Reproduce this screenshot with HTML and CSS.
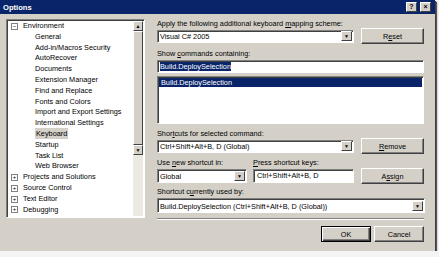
FILE: index.html
```
<!DOCTYPE html>
<html lang="en">

<head>
  <meta charset="UTF-8">
  <title>Options</title>
  <link rel="stylesheet" href="styles.css">
</head>

<body>
  <div class="dialog">
    <div class="titlebar">
      <span class="title">Options</span>
      <span class="tbtn">?</span>
      <span class="tbtn close">&#215;</span>
    </div>

    <div class="main">
      <div class="tree">
        <ul class="items">
          <li class="top"><span class="exp">&#8722;</span>Environment</li>
          <li class="child">General</li>
          <li class="child">Add-in/Macros Security</li>
          <li class="child">AutoRecover</li>
          <li class="child">Documents</li>
          <li class="child">Extension Manager</li>
          <li class="child">Find and Replace</li>
          <li class="child">Fonts and Colors</li>
          <li class="child">Import and Export Settings</li>
          <li class="child">International Settings</li>
          <li class="child"><span class="sel">Keyboard</span></li>
          <li class="child">Startup</li>
          <li class="child">Task List</li>
          <li class="child">Web Browser</li>
          <li class="top"><span class="exp">+</span>Projects and Solutions</li>
          <li class="top"><span class="exp">+</span>Source Control</li>
          <li class="top"><span class="exp">+</span>Text Editor</li>
          <li class="top"><span class="exp">+</span>Debugging</li>
        </ul>
        <div class="vscroll">
          <span class="arrow">&#9650;</span>
          <span class="thumb"></span>
          <span class="arrow">&#9660;</span>
        </div>
      </div>

      <div class="panel">
        <div class="label">Apply the following additional keyboard <u>m</u>apping scheme:</div>
        <div class="row">
          <div class="combo wide"><span class="val">Visual C# 2005</span><span class="drop">&#9660;</span></div>
          <button class="btn">R<u>e</u>set</button>
        </div>

        <div class="label gap">Show <u>c</u>ommands containing:</div>
        <div class="field"><span class="mark">Build.DeploySelection</span></div>
        <div class="list">
          <div class="list-sel">Build.DeploySelection</div>
        </div>

        <div class="label gap">Shor<u>t</u>cuts for selected command:</div>
        <div class="row">
          <div class="combo wide"><span class="val">Ctrl+Shift+Alt+B, D (Global)</span><span class="drop">&#9660;</span></div>
          <button class="btn"><u>R</u>emove</button>
        </div>

        <div class="pair gap-s">
          <div class="col-a">
            <div class="label">Use <u>n</u>ew shortcut in:</div>
            <div class="combo"><span class="val">Global</span><span class="drop">&#9660;</span></div>
          </div>
          <div class="col-b">
            <div class="label"><u>P</u>ress shortcut keys:</div>
            <div class="field keys">Ctrl+Shift+Alt+B, D</div>
          </div>
          <button class="btn assign">A<u>s</u>sign</button>
        </div>

        <div class="label gap-s">Shortcut c<u>u</u>rrently used by:</div>
        <div class="combo full"><span class="val">Build.DeploySelection (Ctrl+Shift+Alt+B, D (Global))</span><span class="drop">&#9660;</span></div>

        <div class="sep"></div>

        <div class="actions">
          <button class="btn default">OK</button>
          <button class="btn">Cancel</button>
        </div>
      </div>
    </div>
  </div>
</body>

</html>
```

FILE: styles.css
```
body {
  margin: 0;
  padding: 0;
  background: #f4f4f4;
  font-family: "Liberation Sans", Arial, sans-serif;
  font-size: 7.3px;
  color: #000;
}

.dialog {
  width: 435px;
  height: 251px;
  background: #d4d0c8;
  box-shadow: 1px 1px 0 #404040, 2px 2px 1px #555;
  overflow: hidden;
}

.titlebar {
  height: 14px;
  background: #0a246a;
  display: flex;
  align-items: center;
  padding: 0 4px 0 3px;
}

.title {
  flex: 1;
  color: #fff;
  font-weight: bold;
  font-size: 7.6px;
}

.tbtn {
  width: 9px;
  height: 8px;
  margin-left: 3px;
  background: #d4d0c8;
  border: 1px solid;
  border-color: #fff #404040 #404040 #fff;
  font-size: 7px;
  font-weight: bold;
  line-height: 8px;
  text-align: center;
}

.main {
  display: flex;
  padding: 5px 0 0 6px;
}

/* tree */

.tree {
  width: 137px;
  height: 197px;
  background: #fff;
  border: 1px solid;
  border-color: #808080 #fff #fff #808080;
  box-shadow: inset 1px 1px 0 #404040;
  display: flex;
  overflow: hidden;
}

.items {
  flex: 1;
  list-style: none;
  margin: 0;
  padding: 1px 0 0 0;
  overflow: hidden;
}

.items li {
  height: 10.8px;
  line-height: 10.8px;
  white-space: nowrap;
}

.top {
  padding-left: 4px;
  display: flex;
  align-items: center;
}

.exp {
  width: 5px;
  height: 5px;
  border: 1px solid #808080;
  font-size: 6px;
  line-height: 5px;
  text-align: center;
  margin-right: 5px;
  color: #000;
}

.child {
  padding-left: 28px;
}

.sel {
  background: #d4d0c8;
  padding: 1px 1px;
}

.vscroll {
  width: 10px;
  margin: 1px 1px 1px 0;
  background: #ece9e4;
  display: flex;
  flex-direction: column;
}

.arrow {
  height: 8px;
  background: #d4d0c8;
  border: 1px solid;
  border-color: #fff #404040 #404040 #fff;
  font-size: 5px;
  line-height: 8px;
  text-align: center;
}

.thumb {
  height: 112px;
  background: #d4d0c8;
  border: 1px solid;
  border-color: #fff #404040 #404040 #fff;
}

/* right panel */

.panel {
  width: 267px;
  margin-left: 12px;
}

.label {
  height: 10px;
  line-height: 10px;
  white-space: nowrap;
}

.gap {
  margin-top: 5px;
}

.gap-s {
  margin-top: 4px;
}

.row {
  display: flex;
  align-items: center;
  justify-content: space-between;
  margin-top: -1px;
}

.combo {
  height: 11px;
  background: #fff;
  border: 1px solid;
  border-color: #808080 #fff #fff #808080;
  box-shadow: inset 1px 1px 0 #404040;
  display: flex;
  align-items: center;
  padding-left: 2px;
}

.combo .val {
  flex: 1;
  white-space: nowrap;
  overflow: hidden;
  padding-top: 1px;
}

.drop {
  width: 9px;
  height: 8px;
  margin-right: 1px;
  background: #d4d0c8;
  border: 1px solid;
  border-color: #fff #404040 #404040 #fff;
  font-size: 5px;
  line-height: 8px;
  text-align: center;
}

.wide {
  width: 193px;
}

.full {
  width: 264px;
  height: 13px;
  margin-top: 1px;
}

.btn {
  font-family: inherit;
  font-size: 7.3px;
  width: 63px;
  height: 16px;
  padding: 0;
  background: #d4d0c8;
  border: 1px solid;
  border-color: #fff #404040 #404040 #fff;
  box-shadow: inset -1px -1px 0 #808080;
  color: #000;
}

.field {
  height: 11px;
  line-height: 11px;
  background: #fff;
  border: 1px solid;
  border-color: #808080 #fff #fff #808080;
  box-shadow: inset 1px 1px 0 #404040;
  padding-left: 2px;
  margin-top: 1px;
  white-space: nowrap;
}

.mark {
  background: #0a246a;
  color: #fff;
}

.list {
  height: 45px;
  margin-top: 3px;
  background: #fff;
  border: 1px solid;
  border-color: #808080 #fff #fff #808080;
  box-shadow: inset 1px 1px 0 #404040;
  padding: 1px 0 0 1px;
}

.list-sel {
  height: 9px;
  line-height: 9px;
  margin-right: 1px;
  padding-left: 2px;
  background: #0a246a;
  color: #fff;
}

.pair {
  display: flex;
  align-items: flex-end;
}

.col-a {
  width: 90px;
}

.col-b {
  width: 101px;
  margin-left: 6px;
}

.col-b .field {
  height: 12px;
}

.keys {
  padding-left: 3px;
}

.col-a .combo {
  height: 12px;
  margin-top: 1px;
}

.assign {
  margin-left: 7px;
  margin-bottom: -1px;
}

.sep {
  margin-top: 5px;
  height: 0;
  border-top: 1px solid #808080;
  border-bottom: 1px solid #fff;
}

.actions {
  display: flex;
  justify-content: flex-end;
  margin-top: 6px;
}

.actions .btn {
  width: 50px;
  margin-left: 3px;
}

.actions .default {
  border: 1px solid #000;
  box-shadow: inset 1px 1px 0 #fff, inset -1px -1px 0 #404040, inset -2px -2px 0 #808080;
}
```
